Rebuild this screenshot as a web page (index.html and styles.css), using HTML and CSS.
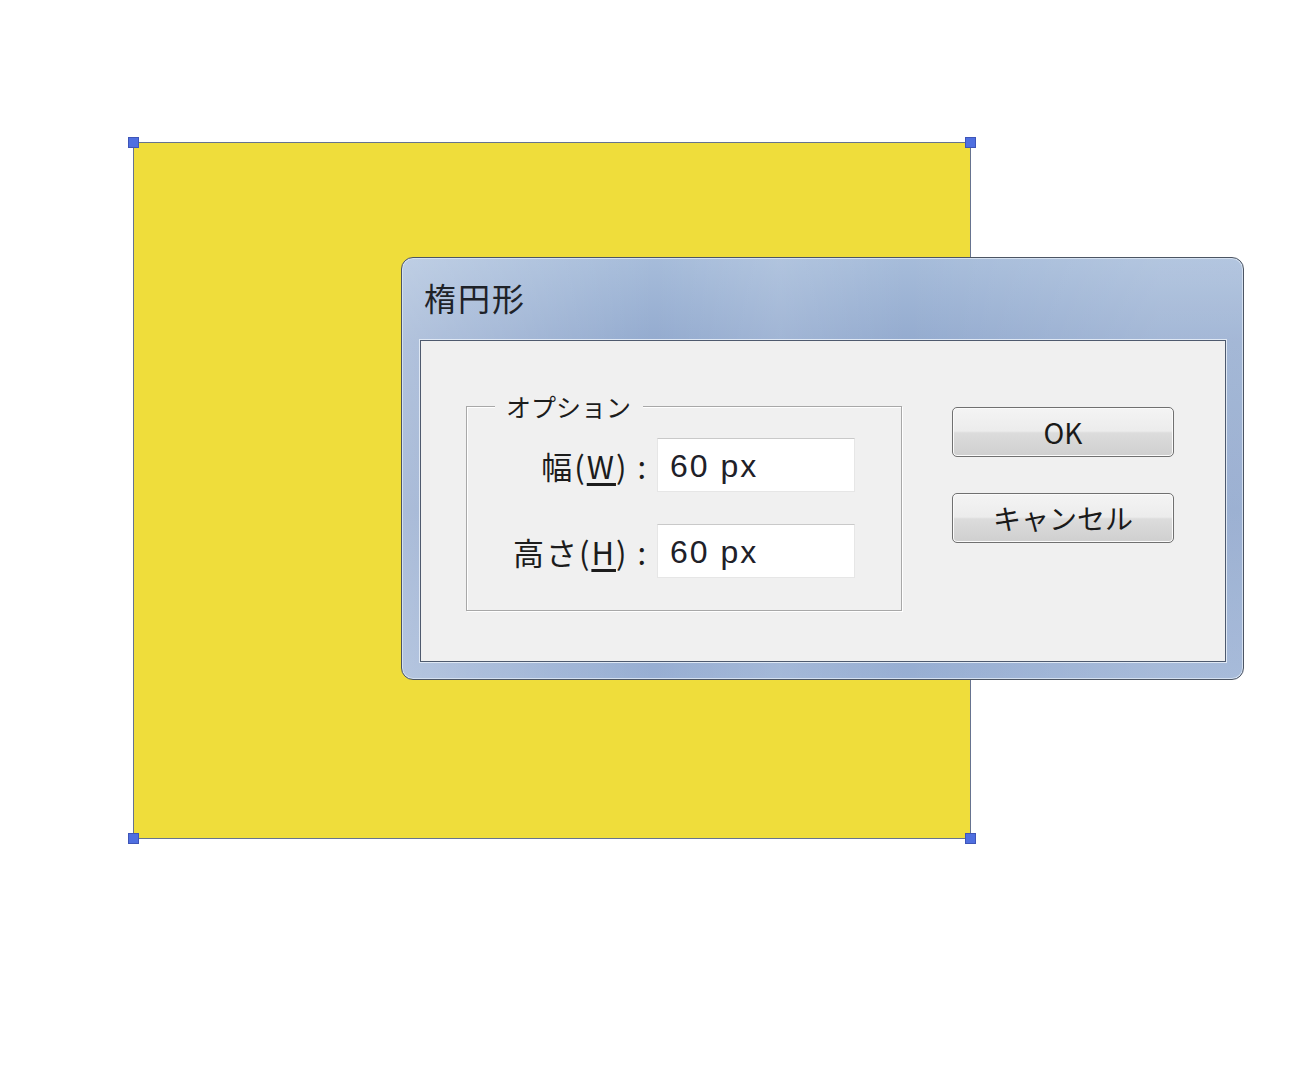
FILE: index.html
```html
<!DOCTYPE html>
<html lang="ja">
<head>
  <meta charset="UTF-8">
  <title>楕円形</title>
  <link rel="stylesheet" href="styles.css">
</head>
<body>
  <div class="canvas">
    <div class="shape">
      <span class="handle tl"></span>
      <span class="handle tr"></span>
      <span class="handle bl"></span>
      <span class="handle br"></span>
    </div>

    <div class="dialog">
      <div class="title">楕円形</div>
      <div class="panel">
        <div class="group">
          <span class="group-label">オプション</span>
          <div class="fields">
            <label class="field-label">幅(<u>W</u>) :</label>
            <div class="input">60 px</div>
            <label class="field-label">高さ(<u>H</u>) :</label>
            <div class="input">60 px</div>
          </div>
        </div>
        <div class="buttons">
          <button class="btn">OK</button>
          <button class="btn">キャンセル</button>
        </div>
      </div>
    </div>
  </div>
</body>
</html>
```

FILE: styles.css
```css
body {
  margin: 0;
  background: #ffffff;
  font-family: "Noto Sans CJK JP", "Liberation Sans", sans-serif;
  color: #1c1c1c;
}

.canvas {
  position: relative;
  width: 1300px;
  height: 1090px;
  overflow: hidden;
}

/* selected shape on the artboard */
.shape {
  position: absolute;
  left: 133px;
  top: 142px;
  width: 836px;
  height: 695px;
  background: #efdd3b;
  border: 1px solid #66738f;
}

.handle {
  position: absolute;
  width: 11px;
  height: 11px;
  background: #4f6fe0;
  border: 1px solid #3e55b8;
  box-sizing: border-box;
}
.handle.tl { left: -6px; top: -6px; }
.handle.tr { right: -6px; top: -6px; }
.handle.bl { left: -6px; bottom: -6px; }
.handle.br { right: -6px; bottom: -6px; }

/* dialog window */
.dialog {
  position: absolute;
  left: 401px;
  top: 257px;
  width: 841px;
  height: 421px;
  border: 1px solid #4c5563;
  border-radius: 12px;
  background:
    linear-gradient(90deg, rgba(255,255,255,0.28) 0%, rgba(255,255,255,0) 30%, rgba(255,255,255,0.12) 45%, rgba(255,255,255,0) 60%, rgba(255,255,255,0.15) 90%),
    linear-gradient(180deg, #a6bcda 0%, #94abcf 20%, #8ba3ca 60%, #98afd3 100%);
  box-shadow: inset 0 0 0 1px #d4e0f0;
  display: flex;
  flex-direction: column;
}

.title {
  height: 82px;
  padding-left: 22px;
  font-size: 32px;
  letter-spacing: 2px;
  line-height: 78px;
  color: #1e2228;
}

.panel {
  flex: 1;
  margin: 0 17px 17px 18px;
  background: #f0f0f0;
  border: 1px solid #4e5a6e;
  box-shadow: 0 0 0 1px #dfe8f4;
  display: flex;
  align-items: flex-start;
  padding: 65px 0 0 45px;
}

.group {
  position: relative;
  width: 434px;
  height: 203px;
  border: 1px solid #a8a8a8;
  box-shadow: inset 1px 1px 0 #ffffff, 1px 1px 0 #ffffff;
}

.group-label {
  position: absolute;
  left: 28px;
  top: -19px;
  padding: 0 12px 0 11px;
  background: #f0f0f0;
  font-size: 25px;
  line-height: 36px;
}

.fields {
  display: grid;
  grid-template-columns: 171px 198px;
  grid-auto-rows: 54px;
  column-gap: 9px;
  row-gap: 32px;
  padding: 31px 0 0 10px;
  align-items: center;
}

.field-label {
  text-align: right;
  font-size: 31px;
  letter-spacing: 2px;
  white-space: nowrap;
}

.field-label u {
  text-underline-offset: 4px;
}

.input {
  height: 54px;
  box-sizing: border-box;
  background: #ffffff;
  border: 1px solid #e6e6e6;
  border-top-color: #c9c9c9;
  padding-left: 12px;
  font-family: "Liberation Sans", sans-serif;
  font-size: 32px;
  letter-spacing: 2px;
  line-height: 54px;
  color: #202028;
}

.buttons {
  display: flex;
  flex-direction: column;
  gap: 36px;
  margin-left: 50px;
  margin-top: 1px;
}

.btn {
  width: 222px;
  height: 50px;
  border: 1px solid #707070;
  border-radius: 5px;
  background: linear-gradient(180deg, #f4f4f4 0%, #ececec 48%, #dcdcdc 52%, #cfcfcf 100%);
  box-shadow: inset 0 0 0 1px #fbfbfb;
  font-family: "Noto Sans CJK JP", "Liberation Sans", sans-serif;
  font-size: 28px;
  line-height: 46px;
  color: #1a1a1a;
  padding: 0;
}
```
